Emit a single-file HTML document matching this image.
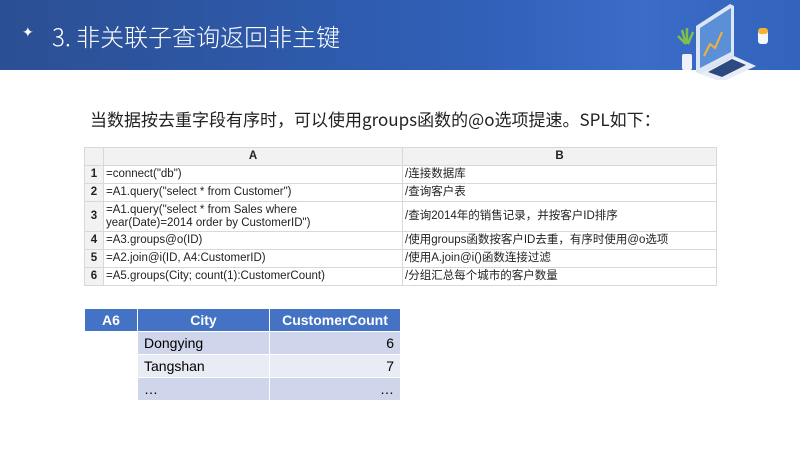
<!DOCTYPE html>
<html><head><meta charset="utf-8"><style>
body{margin:0;width:800px;height:450px;background:#fff;position:relative;overflow:hidden;font-family:"Liberation Sans","Noto Sans CJK SC",sans-serif}
.hdr{position:absolute;left:0;top:0;width:800px;height:70px;background:linear-gradient(90deg,#2b4f93 0%,#3060b8 60%,#3a6cc8 80%,#3264bd 100%)}
.title{position:absolute;left:52px;top:18px;color:#fff;font-size:24px;font-family:"Noto Sans CJK SC",sans-serif;font-weight:300}
.star{position:absolute;left:22px;top:24px;color:#fff;font-size:14px}
.intro{position:absolute;left:90px;top:106px;font-size:17px;color:#222;font-family:"Noto Sans CJK SC",sans-serif}
table{border-collapse:collapse;position:absolute}
.t1{left:84px;top:147px;width:633px;font-size:11.5px;color:#222}
.t1 td{border:1px solid #d8d8d8;padding:0 2px;height:17px;line-height:13px}
.t1 .h td{background:#f2f2f2;font-weight:bold;text-align:center}
.t1 td.n{background:#f2f2f2;font-weight:bold;text-align:center;width:14px}
.t2{left:84px;top:308px;font-size:14px}
.t2 td{border:1px solid #fff;height:22px;padding:0 6px}
.t2 .h td{background:#4472c4;color:#fff;font-weight:bold;text-align:center}
.d1{background:#cfd5ea}.d2{background:#e9ebf5}
</style></head><body>
<div class="hdr"></div>
<div class="star">✦</div>
<div class="title">3. 非关联子查询返回非主键</div>
<svg style="position:absolute;left:660px;top:0px" width="130" height="80" viewBox="0 0 130 80">
<path d="M26 44 L22 30 M27 44 L27 28 M28 44 L33 32 M26 44 L18 36" stroke="#7fbf48" stroke-width="2.5"/>
<rect x="22" y="54" width="10" height="16" rx="2" fill="#eef2f8"/>
<path d="M36 26 L70 4 L74 6 L74 56 L40 74 L36 72 Z" fill="#dde6f4"/>
<path d="M40 28 L71 8 L71 52 L40 68 Z" fill="#5b8fd8"/>
<path d="M44 56 L50 44 L55 48 L62 32" stroke="#f2b233" stroke-width="2" fill="none"/>
<path d="M40 74 L74 56 L96 66 L62 82 Z" fill="#e8edf6"/><path d="M48 72 L72 59 L86 65 L62 77 Z" fill="#2c4a80"/>
<rect x="98" y="30" width="10" height="14" rx="3" fill="#f4f6fb"/><rect x="98" y="28" width="10" height="6" rx="3" fill="#f2b233"/>
</svg>
<div class="intro">当数据按去重字段有序时，可以使用groups函数的@o选项提速。SPL如下：</div>
<table class="t1">
<tr class="h"><td class="n"></td><td>A</td><td>B</td></tr>
<tr><td class="n">1</td><td>=connect("db")</td><td>/连接数据库</td></tr>
<tr><td class="n">2</td><td>=A1.query("select * from Customer")</td><td>/查询客户表</td></tr>
<tr><td class="n" style="height:29px">3</td><td style="width:294px">=A1.query("select * from Sales where<br>year(Date)=2014 order by CustomerID")</td><td>/查询2014年的销售记录，并按客户ID排序</td></tr>
<tr><td class="n">4</td><td>=A3.groups@o(ID)</td><td>/使用groups函数按客户ID去重，有序时使用@o选项</td></tr>
<tr><td class="n">5</td><td>=A2.join@i(ID, A4:CustomerID)</td><td>/使用A.join@i()函数连接过滤</td></tr>
<tr><td class="n">6</td><td>=A5.groups(City; count(1):CustomerCount)</td><td>/分组汇总每个城市的客户数量</td></tr>
</table>
<table class="t2">
<tr class="h"><td style="width:40px">A6</td><td style="width:119px">City</td><td style="width:118px">CustomerCount</td></tr>
<tr><td></td><td class="d1">Dongying</td><td class="d1" style="text-align:right">6</td></tr>
<tr><td></td><td class="d2">Tangshan</td><td class="d2" style="text-align:right">7</td></tr>
<tr><td></td><td class="d1">…</td><td class="d1" style="text-align:right">…</td></tr>
</table>
</body></html>
